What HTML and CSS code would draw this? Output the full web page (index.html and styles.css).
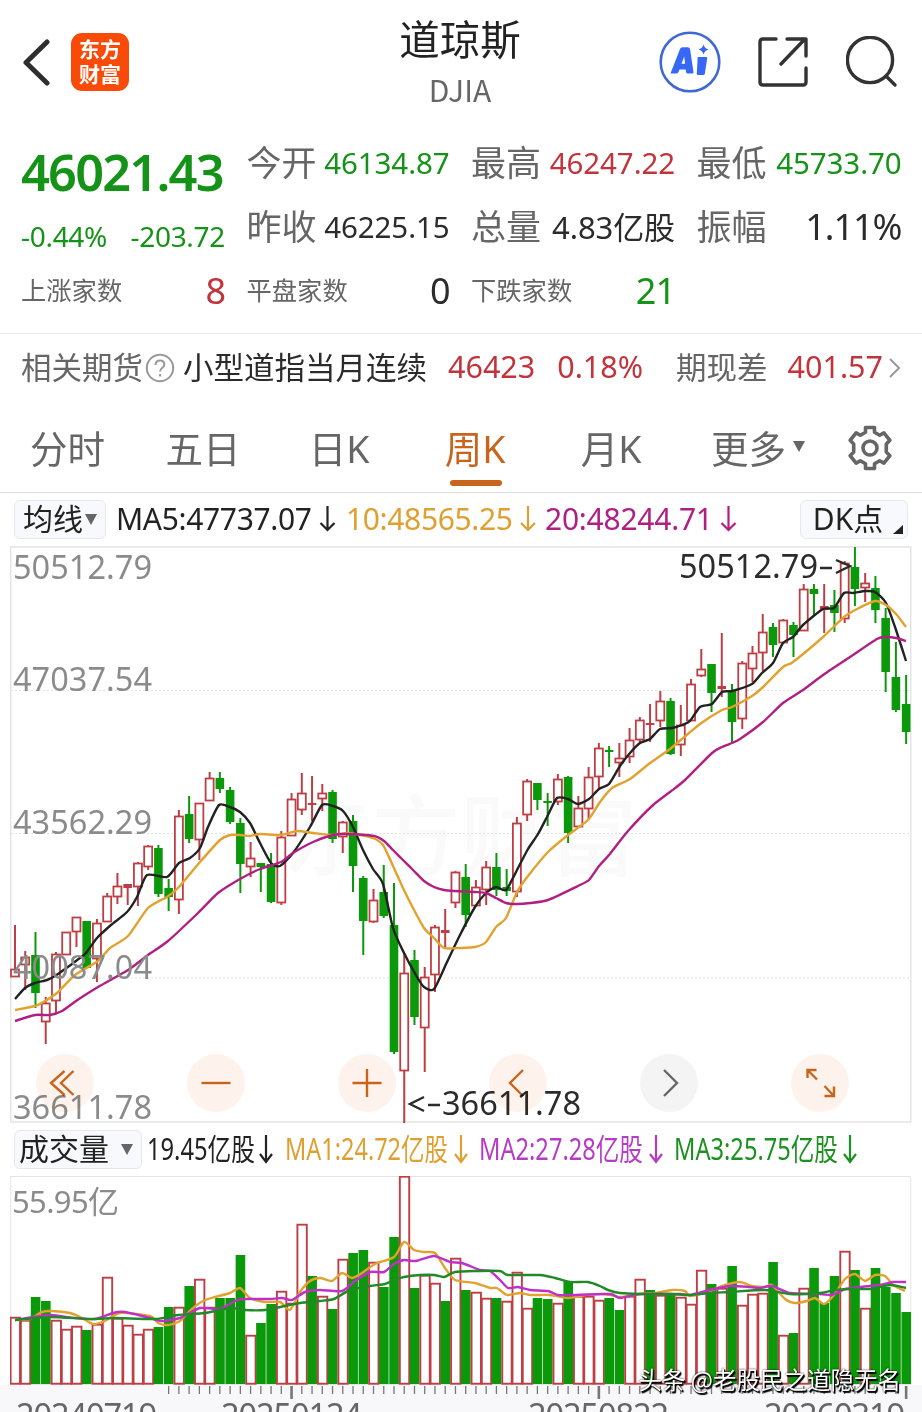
FILE: index.html
```html
<!DOCTYPE html>
<html lang="zh-CN">
<head>
<meta charset="utf-8">
<title>道琼斯 DJIA</title>
<link rel="stylesheet" href="styles.css">
</head>
<body>
<div class="app">
  <header class="header">
    <div class="header-left">
      <svg class="back" width="28" height="48" viewBox="0 0 28 48"><path d="M25 4 4 24.500 25 45" /></svg>
      <div class="logo"><span>东方</span><span>财富</span></div>
    </div>
    <div class="header-title"><h1>道琼斯</h1><p>DJIA</p></div>
    <div class="header-right">
      <svg width="62" height="62" viewBox="0 0 62 62">
        <circle cx="31" cy="31" r="29.300" fill="none" stroke="#4169d4" stroke-width="2.600"/>
        <path fill="#3668f5" fill-rule="evenodd" d="M11.500 42.500 21 18q.6-1.800 2.600-1.800h5.200q2 0 2.300 2l3.400 23q.1 1.300-1.200 1.300h-4.800q-1.300 0-1.500-1.400l-.3-2.600h-6.200l-1 2.600q-.5 1.400-1.900 1.400Zm11-9.800h3.600l-.9-7.200Z"/>
        <path fill="#3668f5" d="M39.800 26h7.400q1.200 0 1 1.200l-2.400 15.600q-.2 1.200-1.400 1.200h-5.500q-1.300 0-1.100-1.200l.9-16.800ZM44.500 13.500q1 4 5 5-4 1-5 5-1-4-5-5 4-1 5-5Z"/>
      </svg>
      <svg class="line-icon share" width="52" height="52" viewBox="0 0 52 52"><path d="M19 3H6Q3 3 3 6v40q0 3 3 3h40q3 0 3-3V32M30 3h19v17M47 4 24 28"/></svg>
      <svg class="line-icon" width="52" height="52" viewBox="0 0 52 52"><circle cx="24" cy="24" r="22.600"/><path d="m40 40 9 9"/></svg>
    </div>
  </header>

  <section class="quote">
    <div class="price">
      <strong>46021.43</strong>
      <div class="change"><span>-0.44%</span><span>-203.72</span></div>
    </div>
    <div class="cell"><label>今开</label><b class="down">46134.87</b></div>
    <div class="cell"><label>最高</label><b class="up">46247.22</b></div>
    <div class="cell"><label>最低</label><b class="down">45733.70</b></div>
    <div class="cell"><label>昨收</label><b>46225.15</b></div>
    <div class="cell"><label>总量</label><b class="volume">4.83亿股</b></div>
    <div class="cell"><label>振幅</label><b class="large">1.11%</b></div>
    <div class="cell small"><label>上涨家数</label><b class="up large">8</b></div>
    <div class="cell small"><label>平盘家数</label><b class="large">0</b></div>
    <div class="cell small"><label>下跌家数</label><b class="down large">21</b></div>
  </section>

  <section class="futures">
    <span class="muted">相关期货</span>
    <svg class="help" width="30" height="30" viewBox="0 0 30 30"><circle cx="15" cy="15" r="13.200"/><path d="M10.500 12q.2-4.600 4.500-4.600t4.400 4q0 2-2.300 3.600-2 1.500-2 3.600M15.100 21v2.500"/></svg>
    <span class="name">小型道指当月连续</span>
    <span class="up f-price">46423</span>
    <span class="up f-rate">0.18%</span>
    <span class="muted f-label">期现差</span>
    <span class="up f-diff">401.57</span>
    <svg class="more" width="14" height="22" viewBox="0 0 14 22"><path d="m2 2 9 9-9 9"/></svg>
  </section>

  <nav class="tabs">
    <span>分时</span><span>五日</span><span>日K</span><span class="active">周K</span><span>月K</span>
    <span>更多<i class="caret"></i></span>
    <svg class="gear" width="48" height="48" viewBox="0 0 48 48"><path d="M19.500 3.500h9v4.800l5.200 3 4.200-2.400 6 7.400-3.600 3.600v8.200l3.600 3.600-6 7.400-4.200-2.400-5.200 3v4.800h-9v-4.800l-5.200-3-4.200 2.400-6-7.400 3.600-3.600v-8.200l-3.600-3.600 6-7.400 4.200 2.400 5.200-3Z"/><circle cx="24" cy="24" r="7"/></svg>
  </nav>

  <div class="legend">
    <span class="pill">均线<i class="caret"></i></span>
    <svg class="legend-text" width="650" height="54" viewBox="110 493 650 54">
      <g font-size="30">
        <text x="116" y="530" textLength="196" fill="#222">MA5:47737.07</text>
        <text x="346" y="530" textLength="167" fill="#dfa032">10:48565.25</text>
        <text x="545" y="530" textLength="168" fill="#b02082">20:48244.71</text>
      </g>
      <g class="arrows">
        <path stroke="#222" d="M327.500 506v24m-7-7 7 7 7-7"/>
        <path stroke="#dfa032" d="M528 506v24m-7-7 7 7 7-7"/>
        <path stroke="#b02082" d="M728.500 506v24m-7-7 7 7 7-7"/>
      </g>
    </svg>
    <span class="pill dk">DK点<i class="corner"></i></span>
  </div>

  <div class="chart">
    <svg id="kline" width="902" height="577" viewBox="10 546 902 577"></svg>
    <div class="controls">
      <span><svg viewBox="0 0 58 58"><path d="M28.500 17 15 29l13.500 12M37.500 17 25 29l12.500 12"/></svg></span>
      <span><svg viewBox="0 0 58 58"><path d="M14.500 29h29"/></svg></span>
      <span><svg viewBox="0 0 58 58"><path d="M14.500 29h29M29 15v28"/></svg></span>
      <span><svg viewBox="0 0 58 58"><path d="M34 16 21 29l13 13"/></svg></span>
      <span class="disabled"><svg viewBox="0 0 58 58"><path d="m24 16 13 13-13 13"/></svg></span>
      <span><svg viewBox="0 0 58 58"><path d="M16.500 24v-8h9M16.500 16l9.500 9.500M43 32.500V42h-9.500M43 42l-9.500-10"/></svg></span>
    </div>
  </div>

  <div class="legend vol-legend">
    <span class="pill">成交量<i class="caret"></i></span>
    <svg class="legend-text" width="765" height="54" viewBox="146 1123 765 54">
      <g font-size="30">
        <text x="147" y="1160" textLength="108" lengthAdjust="spacingAndGlyphs" fill="#222">19.45亿股</text>
        <text x="285" y="1160" textLength="163" lengthAdjust="spacingAndGlyphs" fill="#dfa032">MA1:24.72亿股</text>
        <text x="479" y="1160" textLength="164" lengthAdjust="spacingAndGlyphs" fill="#b63cc4">MA2:27.28亿股</text>
        <text x="674" y="1160" textLength="164" lengthAdjust="spacingAndGlyphs" fill="#1c9020">MA3:25.75亿股</text>
      </g>
      <g class="arrows">
        <path stroke="#222" d="M266 1135v27m-6-8 6 8 6-8"/>
        <path stroke="#dfa032" d="M461 1135v27m-6-8 6 8 6-8"/>
        <path stroke="#b63cc4" d="M656 1135v27m-6-8 6 8 6-8"/>
        <path stroke="#1c9020" d="M850 1135v27m-6-8 6 8 6-8"/>
      </g>
    </svg>
  </div>

  <div class="volume-chart">
    <svg id="volume" width="902" height="236" viewBox="10 1176 902 236"></svg>
    <div class="credit">头条 @老股民之道隐无名</div>
  </div>
</div>
<script src="chart.js"></script>
</body>
</html>
```

FILE: styles.css
```css
* { box-sizing: border-box; }
body {
  margin: 0;
  background: #fff;
  color: #2b2b2b;
  font-family: "Noto Sans", "Noto Sans CJK SC", sans-serif;
}
.app { width: 922px; height: 1412px; overflow: hidden; }
svg { display: block; flex: none; }
svg text { font-family: "Noto Sans", "Noto Sans CJK SC", sans-serif; }
.up { color: #c2343b; }
.down { color: #159318; }
.muted { color: #666; }

.header {
  display: grid;
  grid-template-columns: 1fr 200px 1fr;
  height: 131px;
  padding: 0 24px 0 22px;
}
.header-left, .header-right { display: flex; align-items: center; height: 124px; }
.back { fill: none; stroke: #2e2e2e; stroke-width: 5; stroke-linecap: round; stroke-linejoin: round; }
.logo {
  display: flex; flex-direction: column; align-items: center; justify-content: center;
  width: 58px; height: 58px; margin-left: 21px; padding-bottom: 2px;
  border-radius: 11px; background: #fa4a08; color: #fff;
  font: 700 21px/25px "Noto Sans CJK SC", sans-serif;
}
.header-title { text-align: center; font-family: "Noto Sans CJK SC", sans-serif; }
.header-title h1 { margin: 10px 0 0; font-size: 40.5px; line-height: 56px; font-weight: 400; color: #222; }
.header-title p { margin: 2px 0 0; font-size: 30px; line-height: 42px; color: #666; }
.header-right { justify-content: flex-end; }
.header-right svg + svg { margin-left: 37px; }
.header-right .share { margin-left: 36px; }
.line-icon { fill: none; stroke: #333; stroke-width: 3.4; stroke-linecap: round; stroke-linejoin: round; }

.quote {
  display: grid;
  grid-template-columns: 204px 203px 204px 205px;
  grid-template-rows: 64px 64px 63px;
  column-gap: 21.500px;
  height: 202px;
  padding-left: 21px;
}
.price { grid-row: 1 / 3; color: #159318; }
.price strong { display: block; margin-top: 7px; font-size: 50.5px; line-height: 68px; font-weight: 600; letter-spacing: -1.8px; white-space: nowrap; }
.change { display: flex; justify-content: space-between; margin-top: 9px; font-size: 28px; line-height: 42px; letter-spacing: -.3px; }
.cell { display: flex; align-items: center; justify-content: space-between; white-space: nowrap; }
.cell label { margin-top: -1px; color: #666; font-size: 35px; line-height: 50px; }
.cell b { font-weight: 400; font-size: 29.5px; line-height: 50px; letter-spacing: -.1px; }
.cell b.large { font-size: 36px; letter-spacing: -1px; }
.cell b.volume { font-size: 31px; }
.small label { margin-top: -2px; font-size: 25.300px; }

.futures {
  display: flex; align-items: center;
  height: 75px; padding: 0 20px 6px 21px;
  border-top: 1.500px solid #e9e9e9;
  font-size: 30.5px; white-space: nowrap;
}
.futures span { margin-top: -4px; }
.help { margin-left: 2px; fill: none; stroke: #999; stroke-width: 2; }
.name { margin-left: 8px; }
.f-price, .f-rate, .f-diff { font-size: 30.5px; }
.f-price { margin-left: 21px; }
.f-rate { margin-left: 22px; }
.f-label { margin-left: 33px; }
.f-diff { margin-left: 20px; }
.more { margin-left: auto; fill: none; stroke: #999; stroke-width: 2; }

.tabs {
  display: grid;
  grid-template-columns: 135px repeat(4, 136px) 158px 66px;
  align-items: center;
  height: 85px;
  border-bottom: 1.500px solid #d9dcdc;
  font-size: 37.5px; color: #666;
}
.tabs span { display: flex; align-items: center; justify-content: center; height: 84px; padding-bottom: 7px; }
.tabs .active { position: relative; color: #c8641c; }
.tabs .active::after {
  content: ""; position: absolute; left: 43px; bottom: 6px;
  width: 52px; height: 6px; border-radius: 3px; background: #c8641c;
}
.caret { border: 6.500px solid transparent; border-top: 11px solid #666; border-bottom: 0; margin-left: 7px; }
.gear { justify-self: center; margin-top: -4px; fill: none; stroke: #666; stroke-width: 3.6; stroke-linejoin: round; }

.legend { display: flex; align-items: center; height: 53px; padding: 0 14px; }
.pill {
  display: flex; align-items: center; justify-content: center; position: relative;
  flex: none; width: 92px; height: 39px;
  border: 1.500px solid #e6e8ee; border-radius: 6px; background: #f8f9fc;
  font-size: 30px; line-height: 36px; color: #222; padding-bottom: 1px;
}
.pill .caret { margin-left: 2px; }
.legend-text { margin-left: 4px; }
.dk { width: 108px; margin-left: auto; padding-right: 12px; }
.corner { position: absolute; right: 4px; bottom: 4px; border-left: 10px solid transparent; border-bottom: 9px solid #222; }
.arrows { fill: none; stroke-width: 2.2; }
.vol-legend .pill { width: 128px; padding-right: 4px; }
.vol-legend .pill .caret { margin-left: 12px; }

.chart { position: relative; height: 577px; padding-left: 10px; }
.controls {
  position: absolute; left: 36px; bottom: 11px;
  display: flex; gap: 93px;
  mix-blend-mode: multiply;
}
.controls span { width: 58px; height: 58px; border-radius: 50%; background: #fef2ec; }
.controls svg { fill: none; stroke: #c8641c; stroke-width: 2.4; }
.controls .disabled { background: #f4f4f4; }
.controls .disabled svg { stroke: #666; }

.volume-chart { position: relative; padding-left: 10px; background: linear-gradient(#fff 209px, #f8f8fb 209px); }
.credit {
  position: absolute; right: 21px; bottom: 17px;
  font: 400 23.500px/32px "Noto Sans CJK SC", sans-serif;
  color: #fff; text-shadow: 1.500px 1.500px 1px #000, 0 0 2px #000, 1px 1px 0 #222;
  white-space: nowrap;
}
```

FILE: chart.js
```js
const GREEN = '#0b990b', RED = '#bd3f45';
const X0 = 15, STEP = 10.243;
const cx = i => X0 + i * STEP;

// One candle per week: colour, body top, body bottom, high, low
const candles = `r969,977,925,977 r957,965,951,990 g955,993,932,1008 r1003,1022,997,1044 r954,1001,952,1013
r932,955,932,955 r917,932,917,947 g921,968,921,968 r923,959,919,982 r896,922,893,922 r886,897,873,904
r884,888,884,905 r863,887,862,906 r846,867,845,870 g848,894,845,897 g888,897,879,911 r816,900,810,914
g814,839,796,843 r803,840,803,860 r778,801,772,801 g778,789,772,793 g790,822,787,824 g823,864,818,893
r858,867,842,877 g863,867,863,892 g864,902,853,903 r837,903,831,905 r799,836,793,836 r793,810,773,815
r803,805,776,821 r793,799,784,811 g792,839,790,843 r822,837,821,853 g821,866,815,892 g878,921,876,955
r900,922,889,923 g892,916,865,918 g925,1052,883,1054 r973,1071,953,1123 g960,1017,950,1025 r977,1028,967,1072
r927,975,925,992 r930,933,909,949 r872,903,871,908 g877,915,864,927 r887,906,880,906 r867,890,861,905
g867,890,853,896 g887,891,869,896 r823,892,817,897 r781,815,779,821 g783,800,783,810 g801,803,793,826
r779,802,774,805 g777,833,776,843 r808,827,796,828 r777,809,767,819 r748,777,743,789 g750,752,746,767
r758,763,743,777 r740,757,728,763 r720,740,717,743 r723,725,704,742 r701,721,691,727 g701,754,698,755
r725,745,705,756 r684,721,679,721 r669,676,649,677 g664,693,664,712 r686,689,633,697 g691,722,684,742
r663,719,661,729 r653,669,646,682 r632,653,614,671 g627,645,623,657 r620,643,619,643 g625,635,622,657
r589,631,584,631 g589,594,584,615 r606,610,584,633 g605,613,590,632 r563,619,561,623 g567,589,547,606
r583,588,573,602 g588,610,576,623 g618,672,608,692 g677,710,642,712 g704,732,675,744`
  .split(/\s+/).map(s => [s[0], ...s.slice(1).split(',').map(Number)]);

const volumes = `r1317 r1320 g1297 g1301 r1320 r1329 r1326 g1330 r1324 r1277 r1318 r1325 r1334 r1329 g1327 g1307
r1307 g1286 r1279 r1307 g1298 g1298 g1255 r1335 g1323 g1304 r1291 r1303 r1224 g1276 r1296 g1309 r1259 g1253
g1250 r1262 g1287 g1237 r1176 g1288 r1275 r1283 g1301 r1258 g1290 r1292 r1298 g1298 r1301 r1272 r1308 g1298
g1299 r1303 g1281 r1296 r1296 r1300 g1298 g1310 r1296 r1279 g1290 r1295 g1293 r1297 r1304 r1270 g1284 r1288
g1266 r1305 r1294 r1293 g1262 r1335 g1333 r1288 g1268 g1303 g1276 r1251 g1270 r1308 g1268 g1287 g1293 g1312`
  .split(/\s+/).map(s => [s[0], +s.slice(1)]);

const averages = {
  '#222': '15,999 25,988 35,983 47,980 55,976 65,969 76,961 86,953 97,938 111,925 127,912 137,897 147,875 167,877 179,863 190,858 200,848 208,827 219,805 230,807 240,812 250,823 260,843 271,863 280,866 293,853 310,827 322,805 333,806 343,811 353,827 363,850 373,869 383,884 393,928 404,953 417,977 424,987 434,989 447,962 460,935 475,907 486,893 496,887 506,890 517,870 528,849 538,834 548,815 557,798 568,799 578,804 589,799 599,789 609,784 620,766 630,753 640,743 650,739 660,729 672,728 682,725 690,721 700,707 712,704 722,692 732,691 752,684 762,673 773,663 783,643 793,637 803,625 823,609 834,608 844,593 853,593 865,591 875,592 886,603 896,630 906,661',
  '#e2a22e': '15,1010 35,1006 45,1001 57,993 75,975 98,961 110,948 128,936 148,908 167,897 178,888 200,862 220,840 230,835 240,835 250,836 260,834 281,835 297,831 313,833 333,835 347,833 360,835 373,838 383,845 393,866 403,888 413,908 424,928 434,938 444,948 460,948 475,947 486,942 496,927 506,918 517,892 528,876 548,852 568,835 588,820 600,802 612,788 630,779 650,763 670,749 700,724 722,710 732,707 752,696 762,688 783,667 793,662 823,637 844,617 857,609 875,601 886,605 896,614 906,627',
  '#b02082': '15,1021 35,1015 50,1015 62,1011 76,1001 98,987 128,970 148,955 168,941 198,913 218,893 240,879 260,869 281,862 293,853 313,842 333,835 347,834 374,836 384,841 393,850 404,861 414,871 424,881 434,887 444,890 454,891 475,892 486,893 496,898 506,903 517,904 530,903 548,900 578,886 589,880 599,866 609,855 628,831 652,806 670,792 685,780 712,753 722,747 732,743 740,739 763,722 783,703 803,690 823,675 850,657 877,639 886,637 896,638 906,641'
};

const volumeAverages = {
  '#e2a22e': '15,1320 30,1319 42,1312 52,1311 70,1313 80,1317 93,1324 105,1321 120,1313 150,1316 158,1323 168,1325 180,1321 192,1309 203,1301 215,1297 230,1293 240,1288 250,1298 265,1302 280,1302 290,1310 300,1292 310,1281 320,1278 332,1281 342,1273 352,1278 362,1273 375,1264 394,1257 404,1242 414,1250 424,1252 435,1253 445,1268 455,1280 475,1283 490,1288 497,1288 507,1295 520,1293 530,1295 550,1295 568,1298 585,1295 605,1294 620,1297 640,1294 655,1293 672,1290 685,1291 690,1296 710,1291 725,1285 740,1282 752,1286 765,1287 772,1285 785,1299 795,1303 807,1301 815,1298 824,1304 834,1295 845,1279 855,1274 865,1281 875,1275 885,1276 893,1285 905,1291',
  '#c030c8': '15,1320 40,1316 52,1315 75,1318 95,1319 113,1313 125,1312 150,1318 162,1321 180,1318 200,1308 220,1309 235,1301 243,1299 270,1299 282,1298 292,1300 305,1292 320,1290 342,1291 355,1281 370,1272 384,1272 394,1264 404,1260 416,1261 434,1256 450,1262 462,1263 480,1270 490,1271 500,1280 508,1288 518,1287 530,1290 548,1291 558,1295 570,1295 610,1294 620,1298 640,1294 680,1294 690,1295 710,1290 730,1286 750,1287 760,1288 772,1286 790,1293 820,1294 832,1295 845,1289 860,1287 880,1285 893,1282 906,1282',
  '#208a28': '15,1320 50,1317 90,1319 115,1318 155,1319 178,1315 205,1313 230,1308 245,1310 265,1310 285,1306 300,1303 320,1301 334,1299 350,1290 370,1286 385,1284 394,1280 404,1277 420,1275 434,1275 444,1277 455,1272 475,1271 500,1271 508,1275 540,1275 555,1278 570,1282 588,1282 600,1286 608,1290 620,1293 640,1294 670,1294 690,1295 710,1293 730,1292 765,1290 790,1294 820,1293 835,1290 850,1289 870,1289 890,1285 906,1288'
};

const line = (x1, y1, x2, y2, color, w) =>
  `<line x1="${x1}" y1="${y1}" x2="${x2}" y2="${y2}" stroke="${color}" stroke-width="${w}"/>`;
const rect = (x, y, w, h, fill, stroke, sw) =>
  `<rect x="${x}" y="${y}" width="${w}" height="${h}" fill="${fill}" stroke="${stroke}" stroke-width="${sw}"/>`;
const label = (x, y, width, text, color) =>
  `<text x="${x}" y="${y}" textLength="${width}" font-size="32.5" fill="${color}">${text}</text>`;

// Smooth path through the points, with tangents kept short so peaks stay in place
const smooth = points => {
  const p = points.split(' ').map(s => s.split(',').map(Number));
  const at = i => p[Math.max(0, Math.min(p.length - 1, i))];
  let d = `M${p[0]}`;
  for (let i = 0; i < p.length - 1; i++) {
    const a = at(i - 1), b = at(i), c = at(i + 1), e = at(i + 2), t = 1 / 9;
    d += `C${b[0] + (c[0] - a[0]) * t} ${b[1] + (c[1] - a[1]) * t} ${c[0] - (e[0] - b[0]) * t} ${c[1] - (e[1] - b[1]) * t} ${c}`;
  }
  return d;
};
const curves = set => Object.entries(set).map(([color, points]) =>
  `<path d="${smooth(points)}" fill="none" stroke="${color}" stroke-width="2.4" stroke-linejoin="round"/>`).join('');

let k = rect(10.75, 547, 900, 575, 'none', '#e3e5e5', 1.5);
k += `<text x="283" y="868" textLength="354" font-size="88" font-weight="500" fill="#fafafa">东方财富</text>`;
for (const y of [690.5, 833.5, 978]) {
  k += `<line x1="11" x2="910" y1="${y}" y2="${y}" stroke="#e4e4e4" stroke-dasharray="2 2"/>`;
}
candles.forEach(([type, top, bottom, high, low], i) => {
  const x = cx(i), color = type === 'g' ? GREEN : RED, h = bottom - top;
  if (type === 'g' || h < 5) {
    k += line(x, high, x, low, color, 2) + rect(x - 4.3, top, 8.6, h, color, 'none', 0);
  } else {
    k += line(x, high, x, top, color, 2) + line(x, bottom, x, low, color, 2)
       + rect(x - 4, top + 0.5, 8, h - 1, '#fff', color, 1.8);
  }
});
k += curves(averages);
[['50512.79', 579], ['47037.54', 691], ['43562.29', 834], ['40087.04', 979], ['36611.78', 1119]]
  .forEach(([t, y]) => { k += label(13, y, 139, t, '#8b8b8b'); });
k += label(679, 578, 139, '50512.79', '#2b2b2b') + label(442, 1115, 139, '36611.78', '#2b2b2b');
k += `<path d="M820 568h12M836 560l14 6-14 7M424 1097l-14 7 14 7M428 1105h12" fill="none" stroke="#2b2b2b" stroke-width="2.4"/>`;
document.getElementById('kline').innerHTML = k;

let v = rect(10.75, 1176.5, 900, 208, 'none', '#e3e5e5', 1);
volumes.forEach(([type, top], i) => {
  const x = cx(i);
  v += type === 'g'
    ? rect(x - 4.7, top, 9.6, 1384 - top, GREEN, 'none', 0)
    : rect(x - 4.4, top + 0.7, 9.4, 1383 - top, '#fff', RED, 1.9);
});
v += curves(volumeAverages);
v += `<text x="12" y="1213" textLength="107" font-size="31" fill="#8b8b8b">55.95亿</text>`;
for (let i = 15; i < 88; i++) {
  const major = i === 27 || i === 57 || i === 87;
  v += line(cx(i), 1386, cx(i), major ? 1399 : 1394, '#777', major ? 2.6 : 1.3);
}
[['20240719', 16], ['20250124', 221], ['20250822', 528], ['20260319', 764]]
  .forEach(([t, x]) => { v += label(x, 1427, 141, t, '#666'); });
document.getElementById('volume').innerHTML = v;
```
